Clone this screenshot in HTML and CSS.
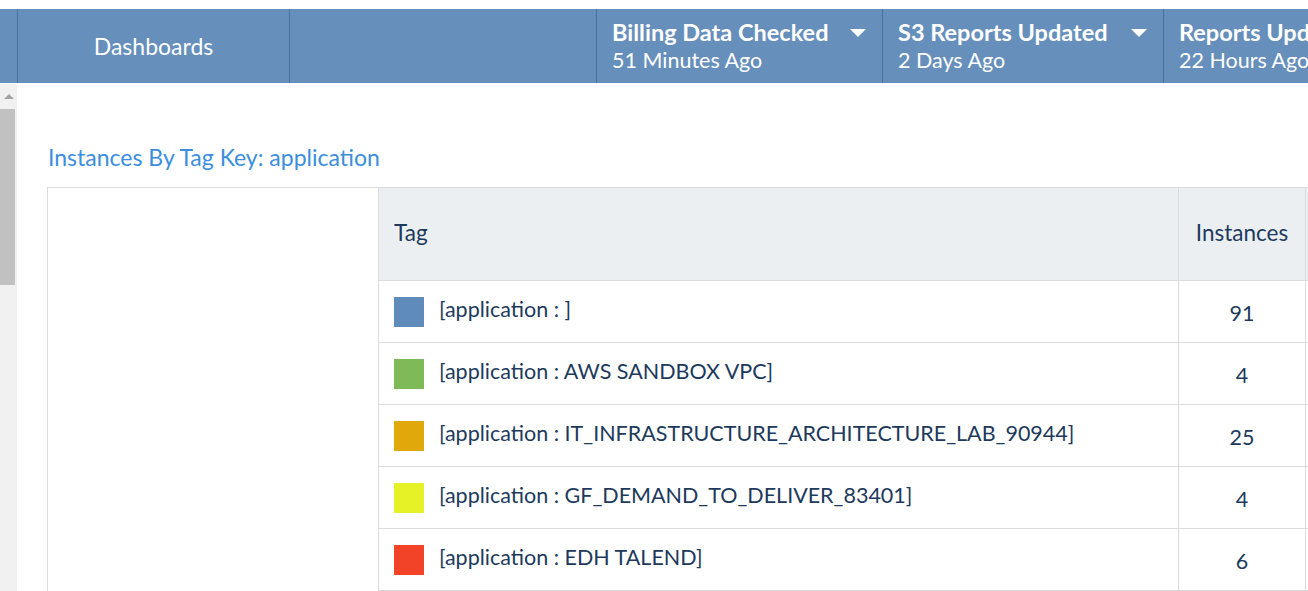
FILE: index.html
```html
<!DOCTYPE html>
<html>
<head>
<meta name="viewport" content="width=device-width, initial-scale=1.0"/>
<link rel="stylesheet" href="styles.css">
</head>
<body>

<!-- Top navigation bar -->
<div class="topbar">
  <div class="nav-edge"></div>
  <div class="nav-item">Dashboards</div>
  <div class="nav-spacer"></div>
  <div class="status billing">
    <div class="status-text">
      <div class="status-title">Billing Data Checked</div>
      <div class="status-time">51 Minutes Ago</div>
    </div>
    <span class="caret"></span>
  </div>
  <div class="status s3">
    <div class="status-text">
      <div class="status-title">S3 Reports Updated</div>
      <div class="status-time">2 Days Ago</div>
    </div>
    <span class="caret"></span>
  </div>
  <div class="status reports">
    <div class="status-text">
      <div class="status-title">Reports Updated</div>
      <div class="status-time">22 Hours Ago</div>
    </div>
    <span class="caret"></span>
  </div>
</div>

<div class="main">
  <!-- fake scrollbar of the inner frame -->
  <div class="scrollbar">
    <div class="scroll-up"><span class="scroll-arrow"></span></div>
    <div class="scroll-thumb"></div>
  </div>

  <div class="content">
    <h2 class="widget-title">Instances By Tag Key: application</h2>

    <div class="panel">
      <div class="chart-pane"></div>
      <table class="tag-table">
        <thead>
          <tr>
            <th class="col-tag">Tag</th>
            <th class="col-count">Instances</th>
            <th class="col-more"></th>
          </tr>
        </thead>
        <tbody>
          <tr>
            <td class="col-tag"><div class="tag"><span class="swatch blue"></span><span class="tag-label">[application : ]</span></div></td>
            <td class="col-count">91</td>
            <td class="col-more"></td>
          </tr>
          <tr>
            <td class="col-tag"><div class="tag"><span class="swatch green"></span><span class="tag-label">[application : AWS SANDBOX VPC]</span></div></td>
            <td class="col-count">4</td>
            <td class="col-more"></td>
          </tr>
          <tr>
            <td class="col-tag"><div class="tag"><span class="swatch orange"></span><span class="tag-label">[application : IT_INFRASTRUCTURE_ARCHITECTURE_LAB_90944]</span></div></td>
            <td class="col-count">25</td>
            <td class="col-more"></td>
          </tr>
          <tr>
            <td class="col-tag"><div class="tag"><span class="swatch yellow"></span><span class="tag-label">[application : GF_DEMAND_TO_DELIVER_83401]</span></div></td>
            <td class="col-count">4</td>
            <td class="col-more"></td>
          </tr>
          <tr>
            <td class="col-tag"><div class="tag"><span class="swatch red"></span><span class="tag-label">[application : EDH TALEND]</span></div></td>
            <td class="col-count">6</td>
            <td class="col-more"></td>
          </tr>
        </tbody>
      </table>
    </div>
  </div>
</div>

</body>
</html>
```

FILE: styles.css
```css
html, body {
    margin: 0;
    height: 100%;
    overflow: hidden;
}

body {
    padding-top: 9px;
    box-sizing: border-box;
    font-family: Lato, "Open Sans", sans-serif;
    background-color: #fff;
    color: #1d3a5c;
}

/* top bar */
.topbar {
    display: flex;
    height: 74px;
    background-color: #668fbb;
    color: #fff;
    white-space: nowrap;
}

.topbar > div {
    flex: none;
    border-right: 1px solid #4b7099;
}

.nav-edge {
    width: 17px;
}

.nav-item {
    width: 271px;
    display: flex;
    align-items: center;
    justify-content: center;
    font-size: 23px;
}

.nav-spacer {
    width: 306px;
}

.status {
    display: flex;
    align-items: center;
    padding-left: 15px;
    box-sizing: border-box;
}

.status.billing { width: 286px; }
.status.s3 { width: 281px; }
.status.reports { width: 300px; }

.status-title {
    font-size: 23.5px;
    font-weight: bold;
    line-height: 26px;
}

.status-time {
    margin-top: 2px;
    font-size: 21.5px;
    line-height: 26px;
}

.caret {
    width: 0;
    height: 0;
    margin-left: auto;
    margin-right: 16px;
    margin-bottom: 26px;
    border-left: 8px solid transparent;
    border-right: 8px solid transparent;
    border-top: 8px solid #fff;
}

/* main area */
.main {
    display: flex;
    height: calc(100% - 74px);
    border-top: 1px solid #fff;
}

.scrollbar {
    flex: none;
    width: 17px;
    background-color: #f1f1f1;
}

.scroll-up {
    height: 25px;
    display: flex;
    align-items: center;
    justify-content: center;
}

.scroll-arrow {
    width: 0;
    height: 0;
    border-left: 5px solid transparent;
    border-right: 5px solid transparent;
    border-bottom: 5px solid #a3a3a3;
}

.scroll-thumb {
    width: 15px;
    height: 176px;
    background-color: #c1c1c1;
}

.content {
    flex: none;
    padding: 60px 0 0 30px;
}

.widget-title {
    margin: 0 0 17px 1px;
    font-size: 23px;
    font-weight: normal;
    line-height: 26px;
    color: #3b8ede;
}

/* table panel */
.panel {
    display: flex;
    border-top: 1px solid #dcdcdc;
    border-left: 1px solid #dcdcdc;
}

.chart-pane {
    flex: none;
    width: 330px;
}

.tag-table {
    flex: none;
    border-collapse: separate;
    border-spacing: 0;
    border-left: 1px solid #dcdcdc;
    table-layout: fixed;
    font-size: 21.5px;
}

.tag-table th,
.tag-table td {
    box-sizing: border-box;
    padding: 0;
    border-right: 1px solid #dcdcdc;
    border-bottom: 1px solid #dcdcdc;
    vertical-align: middle;
    font-weight: normal;
}

.tag-table th {
    height: 93px;
    font-size: 22.5px;
    background-color: #ebeff2;
}

.tag-table td {
    height: 62px;
}

.col-tag {
    width: 800px;
    text-align: left;
}

th.col-tag {
    padding-left: 15px;
    padding-bottom: 3px;
}

.col-count {
    width: 127px;
    text-align: center;
}

th.col-count {
    padding-bottom: 3px;
}

td.col-count {
    padding-top: 2px;
}

.col-more {
    width: 20px;
}

.tag {
    display: flex;
    align-items: center;
    padding-left: 15px;
}

.swatch {
    flex: none;
    width: 30px;
    height: 30px;
    margin-right: 15px;
}

.tag-label {
    margin-bottom: 6px;
}

.blue { background-color: #5f8bbb; }
.green { background-color: #7fba59; }
.orange { background-color: #e0a80b; }
.yellow { background-color: #e6f226; }
.red { background-color: #f24329; }
```
